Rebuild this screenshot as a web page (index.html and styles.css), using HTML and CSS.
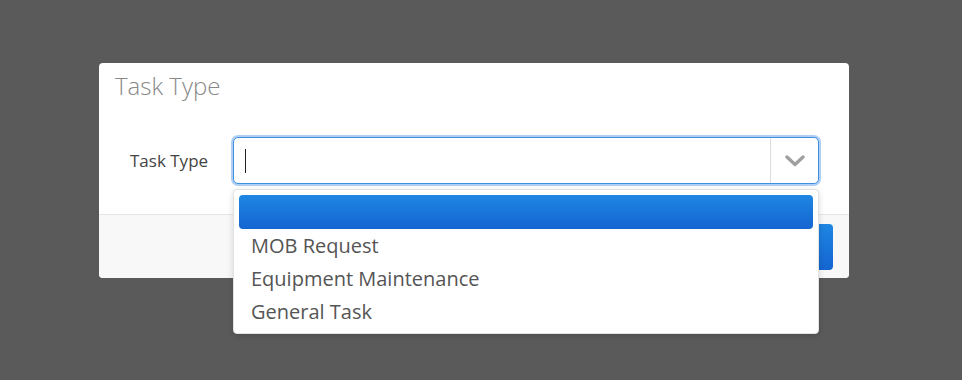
FILE: index.html
```html
<!DOCTYPE html>
<html lang="en">
<head>
    <meta charset="UTF-8">
    <meta name="viewport" content="width=device-width, initial-scale=1.0">
    <title>Task Type</title>
    <link rel="stylesheet" href="styles.css">
</head>
<body>
    <div class="modal">
        <div class="modal-header">
            <h4 class="modal-title">Task Type</h4>
        </div>
        <div class="modal-body">
            <label class="field-label">Task Type</label>
            <div class="select">
                <div class="select-box">
                    <div class="select-value"><span class="caret"></span></div>
                    <div class="select-arrow">
                        <svg width="20" height="12" viewBox="0 0 20 12">
                            <path d="M2 2 L10 9.5 L18 2" fill="none" stroke="#a0a0a0" stroke-width="3.4" stroke-linecap="round" stroke-linejoin="round"/>
                        </svg>
                    </div>
                </div>
                <ul class="select-menu">
                    <li class="option active">&nbsp;</li>
                    <li class="option">MOB Request</li>
                    <li class="option">Equipment Maintenance</li>
                    <li class="option">General Task</li>
                </ul>
            </div>
        </div>
        <div class="modal-footer">
            <button class="button">Save</button>
        </div>
    </div>
</body>
</html>
```

FILE: styles.css
```css
body {
    margin: 0;
    background-color: #5a5a5a;
    font-family: "Open Sans", Arial, sans-serif;
    height: 380px;
    overflow: hidden;
}
.modal {
    width: 750px;
    margin: 63px 0 0 99px;
    background-color: #fff;
    border-radius: 4px;
}
.modal-header {
    height: 44px;
    padding: 0 16px;
}
.modal-title {
    margin: 0;
    font-size: 24px;
    font-weight: 300;
    line-height: 46px;
    color: #888;
}
.modal-body {
    display: flex;
    align-items: center;
    padding: 30px 30px 30px 31px;
}
.field-label {
    width: 103px;
    font-size: 17px;
    color: #444;
}
.select {
    position: relative;
    flex: 1;
}
.select-box {
    display: flex;
    height: 45px;
    border: 1px solid #3f8fdf;
    border-radius: 5px;
    box-shadow: 0 0 0 2px rgba(110, 170, 235, 0.55);
    background-color: #fff;
}
.select-value {
    flex: 1;
    display: flex;
    align-items: center;
    padding-left: 11px;
}
.caret {
    width: 1px;
    height: 24px;
    background-color: #222;
}
.select-arrow {
    width: 47px;
    border-left: 1px solid #ddd;
    display: flex;
    align-items: center;
    justify-content: center;
}
.select-menu {
    position: absolute;
    top: 52px;
    left: 0;
    right: 0;
    margin: 0;
    padding: 5px;
    list-style: none;
    background-color: #fff;
    border: 1px solid #e2e2e2;
    border-radius: 4px;
    box-shadow: 0 2px 6px rgba(0, 0, 0, 0.15);
}
.option {
    height: 33px;
    line-height: 34px;
    padding-left: 12px;
    font-size: 20px;
    color: #555;
}
.option.active {
    height: 34px;
    border-radius: 4px;
    background: linear-gradient(#1e86e3, #1565d0);
}
.modal-footer {
    display: flex;
    justify-content: flex-end;
    padding: 9px 16px 8px;
    border-top: 1px solid #e5e5e5;
    background-color: #f8f8f8;
    border-radius: 0 0 4px 4px;
}
.button {
    width: 80px;
    height: 46px;
    border: none;
    border-radius: 4px;
    background: linear-gradient(#1e86e3, #1565d0);
    color: #fff;
    font-family: inherit;
    font-size: 16px;
}
```
